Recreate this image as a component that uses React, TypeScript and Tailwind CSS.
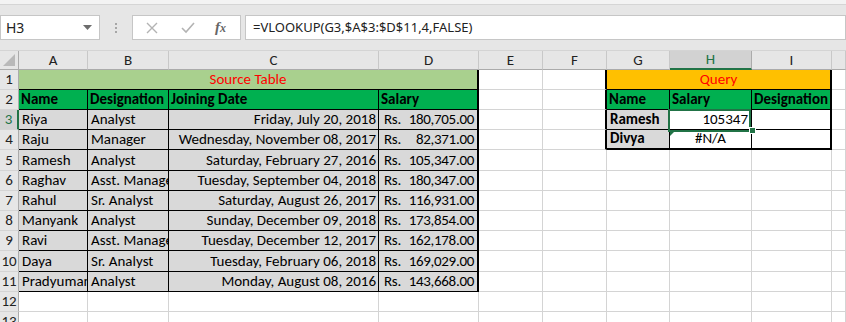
import React from "react";

const cols = [
  "w-[69px]",
  "w-[81px]",
  "w-[210px]",
  "w-[100px]",
  "w-[64px]",
  "w-[64px]",
  "w-[63px]",
  "w-[82px]",
  "w-[80px]",
  "w-[14px]",
];
const letters = ["A", "B", "C", "D", "E", "F", "G", "H", "I", ""];

const rowHeights = [
  "h-[20px]",
  "h-[20px]",
  "h-[20px]",
  "h-[20px]",
  "h-[21px]",
  "h-[20px]",
  "h-[20px]",
  "h-[20px]",
  "h-[20px]",
  "h-[21px]",
  "h-[20px]",
  "h-[20px]",
  "h-[20px]",
];

const people = [
  ["Riya", "Analyst", "Friday, July 20, 2018", "180,705.00"],
  ["Raju", "Manager", "Wednesday, November 08, 2017", "82,371.00"],
  ["Ramesh", "Analyst", "Saturday, February 27, 2016", "105,347.00"],
  ["Raghav", "Asst. Manager", "Tuesday, September 04, 2018", "180,347.00"],
  ["Rahul", "Sr. Analyst", "Saturday, August 26, 2017", "116,931.00"],
  ["Manyank", "Analyst", "Sunday, December 09, 2018", "173,854.00"],
  ["Ravi", "Asst. Manager", "Tuesday, December 12, 2017", "162,178.00"],
  ["Daya", "Sr. Analyst", "Tuesday, February 06, 2018", "169,029.00"],
  ["Pradyuman", "Analyst", "Monday, August 08, 2016", "143,668.00"],
];

const grid = "border-r border-b border-[#d4d4d4]";
const cellBase = "shrink-0 h-full overflow-hidden whitespace-nowrap flex items-end pb-[1px] leading-[18px]";

const Cell = ({
  w,
  className,
  children,
}: {
  w: string;
  className?: string;
  children?: React.ReactNode;
}) => <div className={`${cellBase} ${w} ${className ?? grid}`}>{children}</div>;

const RowHead = ({ n }: { n: number }) => (
  <div
    className={`shrink-0 w-[19px] h-full flex items-end justify-center pb-[1px] leading-[18px] border-b border-[#d4d4d4] ${
      n === 3
        ? "bg-[#d2d2d2] text-[#217346] border-r-2 border-r-[#217346]"
        : "bg-[#e6e6e6] text-[#222] border-r border-r-[#ababab]"
    }`}
  >
    {n}
  </div>
);

const sourceCells = (r: number) => {
  if (r === 1) {
    return (
      <Cell
        w="w-[460px]"
        className="bg-[#a9d08e] border-r-2 border-b border-black justify-center text-[#ff0000]"
      >
        Source Table
      </Cell>
    );
  }
  if (r === 2) {
    const head = ["Name", "Designation", "Joining Date", "Salary"];
    return head.map((h, i) => (
      <Cell
        key={h}
        w={cols[i]}
        className={`bg-[#00b050] font-bold pl-[2px] border-b border-black ${
          i === 3 ? "border-r-2" : "border-r"
        }`}
      >
        {h}
      </Cell>
    ));
  }
  if (r >= 3 && r <= 11) {
    const p = people[r - 3];
    const box = "bg-[#d9d9d9] border-b border-black";
    return (
      <>
        <Cell w={cols[0]} className={`${box} border-r pl-[3px]`}>
          {p[0]}
        </Cell>
        <Cell w={cols[1]} className={`${box} border-r pl-[3px]`}>
          {p[1]}
        </Cell>
        <Cell w={cols[2]} className={`${box} border-r justify-end pr-[2px]`}>
          {p[2]}
        </Cell>
        <Cell
          w={cols[3]}
          className={`${box} border-r-2 justify-between pl-[5px] pr-[3px] tracking-[-0.3px]`}
        >
          <span>Rs.</span>
          <span>{p[3]}</span>
        </Cell>
      </>
    );
  }
  return [0, 1, 2, 3].map((i) => <Cell key={i} w={cols[i]} />);
};

const queryCells = (r: number) => {
  if (r === 1) {
    return (
      <Cell
        w="w-[225px]"
        className="bg-[#ffc000] border-r-2 border-b border-black justify-center text-[#ff0000]"
      >
        Query
      </Cell>
    );
  }
  if (r === 2) {
    return ["Name", "Salary", "Designation"].map((h, i) => (
      <Cell
        key={h}
        w={cols[6 + i]}
        className={`bg-[#00b050] font-bold pl-[2px] border-b border-black ${
          i === 2 ? "border-r-2" : "border-r"
        }`}
      >
        {h}
      </Cell>
    ));
  }
  if (r === 3 || r === 4) {
    const bottom = r === 4 ? "border-b-2" : "border-b";
    return (
      <>
        <Cell w={cols[6]} className={`bg-[#d9d9d9] font-bold pl-[3px] border-r border-black ${bottom}`}>
          {r === 3 ? "Ramesh" : "Divya"}
        </Cell>
        <div
          className={`${cellBase} ${cols[7]} relative overflow-visible bg-white border-r border-black ${bottom} ${
            r === 3 ? "justify-end pr-[3px]" : "justify-center"
          }`}
        >
          {r === 3 ? "105347" : "#N/A"}
          {r === 3 && (
            <>
              <div className="absolute left-[-2px] top-[-1px] w-[83px] h-[23px] border-2 border-[#217346] z-10" />
              <div className="absolute right-[-5px] bottom-[-5px] w-[7px] h-[7px] bg-[#217346] border border-white z-20" />
            </>
          )}
          {r === 4 && (
            <div className="absolute left-0 top-0 w-0 h-0 border-t-[6px] border-t-[#217346] border-r-[6px] border-r-transparent" />
          )}
        </div>
        <Cell w={cols[8]} className={`bg-white border-r-2 border-black ${bottom}`} />
      </>
    );
  }
  return [6, 7, 8].map((i) => <Cell key={i} w={cols[i]} />);
};

const SheetRow = ({ r }: { r: number }) => (
  <div className={`flex ${rowHeights[r - 1]}`}>
    <RowHead n={r} />
    {sourceCells(r)}
    <Cell w={cols[4]} />
    <Cell
      w={cols[5]}
      className={r <= 4 ? "border-r-2 border-r-black border-b border-b-[#d4d4d4]" : grid}
    />
    {queryCells(r)}
    <Cell w={cols[9]} />
  </div>
);

const App = () => {
  return (
    <div className="w-[846px] h-[322px] overflow-hidden bg-white text-[15px] text-black font-['Carlito','Lato',sans-serif]">
      {/* ribbon edge */}
      <div className="h-[5px] bg-[#f3f3f3] border-b border-[#d5d5d5]" />

      {/* formula bar */}
      <div className="h-[45px] bg-[#e6e6e6] flex items-start pt-[10px] font-['Noto_Sans',sans-serif]">
        <div className="w-[100px] h-[25px] bg-white border border-[#c6c6c6] flex items-center justify-between pl-[5px] pr-[7px] text-[14px] text-[#222]">
          <span>H3</span>
          <svg width="9" height="5" viewBox="0 0 9 5">
            <path d="M0 0 L9 0 L4.5 5 Z" fill="#6d6d6d" />
          </svg>
        </div>
        <div className="w-[32px] h-[25px] flex flex-col items-center justify-center gap-[2px]">
          <div className="w-[2px] h-[2px] bg-[#a6a6a6]" />
          <div className="w-[2px] h-[2px] bg-[#a6a6a6]" />
          <div className="w-[2px] h-[2px] bg-[#a6a6a6]" />
        </div>
        <div className="w-[109px] h-[25px] bg-white border border-[#c6c6c6] flex items-center pl-[13px]">
          <svg width="12" height="12" viewBox="0 0 12 12">
            <path d="M1 1 L11 11 M11 1 L1 11" stroke="#b3b3b3" strokeWidth="1.4" />
          </svg>
          <svg className="ml-[23px]" width="14" height="12" viewBox="0 0 14 12">
            <path d="M1 6 L5 10 L13 1" stroke="#b3b3b3" strokeWidth="1.6" fill="none" />
          </svg>
          <span className="ml-[20px] font-['Liberation_Serif',serif] italic font-bold text-[15px] text-[#666] leading-none">
            f<span className="text-[12px]">x</span>
          </span>
        </div>
        <div className="ml-[4px] flex-1 h-[25px] bg-white border border-[#c6c6c6] flex items-center pl-[7px] text-[13px] text-[#222]">
          =VLOOKUP(G3,$A$3:$D$11,4,FALSE)
        </div>
      </div>

      {/* column headers */}
      <div className="flex h-[20px] border-t border-[#d4d4d4]">
        <div className="shrink-0 w-[19px] h-full bg-[#e6e6e6] border-r border-b border-[#ababab] flex items-end justify-end p-[3px]">
          <svg width="12" height="12" viewBox="0 0 12 12">
            <path d="M12 0 L12 12 L0 12 Z" fill="#b9b9b9" />
          </svg>
        </div>
        {letters.map((l, i) => (
          <div
            key={i}
            className={`shrink-0 ${cols[i]} h-full flex items-center justify-center ${
              l === "H"
                ? "bg-[#d2d2d2] text-[#217346] border-r border-r-[#ababab] border-b-2 border-b-[#217346]"
                : "bg-[#e6e6e6] text-[#222] border-r border-r-[#c8c8c8] border-b border-b-[#ababab]"
            }`}
          >
            {l}
          </div>
        ))}
      </div>

      {Array.from({ length: 13 }, (_, i) => (
        <SheetRow key={i} r={i + 1} />
      ))}
    </div>
  );
};

export default App;
